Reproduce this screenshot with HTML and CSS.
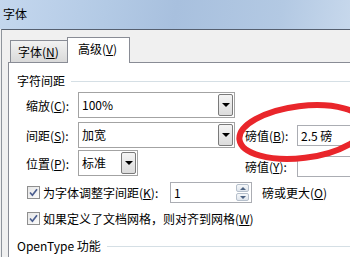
FILE: index.html
```html
<!DOCTYPE html>
<html lang="zh-CN">
<head>
    <meta charset="UTF-8">
    <title>字体</title>
    <link rel="stylesheet" href="styles.css">
</head>
<body>
    <div class="titlebar">字体</div>

    <div class="frame">
        <div class="tabs">
            <div class="tab">字体(<u>N</u>)</div>
            <div class="tab active">高级(<u>V</u>)</div>
        </div>

        <div class="panel">
            <div class="section">
                <span>字符间距</span>
                <div class="rule"></div>
            </div>

            <div class="row">
                <label class="lbl">缩放(<u>C</u>):</label>
                <div class="combo wide">
                    <span class="val">100%</span>
                    <span class="drop"></span>
                </div>
            </div>

            <div class="row">
                <label class="lbl">间距(<u>S</u>):</label>
                <div class="combo wide">
                    <span class="val">加宽</span>
                    <span class="drop"></span>
                </div>
                <div class="side">
                    <label class="lbl">磅值(<u>B</u>):</label>
                    <div class="field">2.5&nbsp;磅</div>
                </div>
            </div>

            <div class="row row-pos">
                <label class="lbl">位置(<u>P</u>):</label>
                <div class="combo narrow">
                    <span class="val">标准</span>
                    <span class="drop"></span>
                </div>
                <div class="side side-low">
                    <label class="lbl">磅值(<u>Y</u>):</label>
                    <div class="field"></div>
                </div>
            </div>

            <div class="check-row first">
                <span class="check">
                    <svg width="13" height="13" viewBox="0 0 13 13"><path d="M3 6.5 L5.4 9.2 L10 3.2" fill="none" stroke="#4a5d8e" stroke-width="1.7"/></svg>
                </span>
                <span class="check-text kern">为字体调整字间距(<u>K</u>):</span>
                <div class="spin">
                    <span class="val">1</span>
                    <span class="spin-btns">
                        <span class="spin-btn up"></span>
                        <span class="spin-btn down"></span>
                    </span>
                </div>
                <span class="after">磅或更大(<u>O</u>)</span>
            </div>

            <div class="check-row">
                <span class="check">
                    <svg width="13" height="13" viewBox="0 0 13 13"><path d="M3 6.5 L5.4 9.2 L10 3.2" fill="none" stroke="#4a5d8e" stroke-width="1.7"/></svg>
                </span>
                <span class="check-text">如果定义了文档网格，则对齐到网格(<u>W</u>)</span>
            </div>

            <div class="section second">
                <span>OpenType 功能</span>
                <div class="rule"></div>
            </div>
        </div>
    </div>

    <svg class="mark" width="118" height="76" viewBox="0 0 118 76">
        <ellipse cx="70" cy="37" rx="63" ry="26" transform="rotate(-7 70 37)" fill="none" stroke="#e9262b" stroke-width="6"/>
    </svg>
</body>
</html>
```

FILE: styles.css
```css
body {
    margin: 0;
    width: 350px;
    height: 257px;
    overflow: hidden;
    position: relative;
    font-family: "Noto Sans CJK SC", "Noto Sans", sans-serif;
    font-size: 12px;
    color: #000;
    background-color: #f0f0f0;
    display: flex;
    flex-direction: column;
}

u {
    text-decoration: underline;
    text-underline-offset: 1px;
}

.titlebar {
    height: 29px;
    line-height: 28px;
    padding-left: 3px;
    background: linear-gradient(100deg, #c4d7ee 0%, #b3cae5 30%, #a8c0de 50%, #b3c9e3 80%, #c7d8ec 100%);
    flex-shrink: 0;
}

.frame {
    flex: 1;
    border-top: 1px solid #566070;
    border-left: 1px solid #8e949c;
    margin-left: 1px;
    padding-left: 6px;
    display: flex;
    flex-direction: column;
    background-color: #f0f0f0;
}

.tabs {
    height: 32px;
    display: flex;
    align-items: flex-end;
    padding-left: 2px;
    flex-shrink: 0;
    position: relative;
    z-index: 1;
}

.tab {
    height: 21px;
    line-height: 21px;
    padding: 0 7px 0 7px;
    width: 42px;
    border: 1px solid #898c95;
    border-bottom: none;
    background: linear-gradient(#f2f2f2, #d9d9d9);
}

.tab.active {
    height: 25px;
    line-height: 22px;
    width: 49px;
    padding-left: 10px;
    padding-right: 2px;
    margin-left: -1px;
    margin-bottom: -1px;
    background: #fff;
}

.panel {
    flex: 1;
    background-color: #fff;
    border-top: 1px solid #898c95;
    border-left: 1px solid #898c95;
}

.section {
    display: flex;
    align-items: center;
    gap: 6px;
    height: 16px;
    margin-top: 9px;
    padding-left: 8px;
}

.section.second {
    margin-top: 8px;
}

.rule {
    flex: 1;
    height: 1px;
    margin-top: 3px;
    background-color: #d5dfe5;
}

.row {
    display: flex;
    align-items: center;
    height: 26px;
    margin-top: 4px;
    padding-left: 17px;
}

.row-pos {
    margin-top: 2px;
}

.lbl {
    width: 52px;
    flex-shrink: 0;
}

.combo {
    display: flex;
    height: 26px;
    box-sizing: border-box;
    border: 1px solid #a3a3a3;
    background: #fff;
    flex-shrink: 0;
}

.combo.wide {
    width: 157px;
}

.combo.narrow {
    width: 60px;
}

.combo .val {
    flex: 1;
    padding-left: 3px;
    line-height: 23px;
}

.drop {
    width: 15px;
    margin: 1px;
    box-sizing: border-box;
    border: 1px solid #7a7a7a;
    border-radius: 2px;
    background: linear-gradient(#f4f4f4, #dcdcdc);
    display: flex;
    align-items: center;
    justify-content: center;
}

.drop::after {
    content: "";
    border-left: 4px solid transparent;
    border-right: 4px solid transparent;
    border-top: 4px solid #000;
}

.side {
    display: flex;
    align-items: center;
    margin-left: 10px;
}

.row-pos .side {
    margin-left: 107px;
    align-self: flex-start;
    margin-top: 6px;
}

.field {
    width: 70px;
    height: 21px;
    box-sizing: border-box;
    border: 1px solid #abadb3;
    padding-left: 3px;
    line-height: 19px;
    flex-shrink: 0;
}

.check-row {
    display: flex;
    align-items: center;
    height: 21px;
    margin-top: 5px;
    padding-left: 18px;
}

.check-row.first {
    margin-top: 6px;
}

.check {
    width: 13px;
    height: 13px;
    box-sizing: border-box;
    border: 1px solid #8f8f8f;
    background: linear-gradient(135deg, #e6e6e6, #fbfbfb);
    display: flex;
    align-items: center;
    justify-content: center;
    margin-right: 3px;
    flex-shrink: 0;
}

.check svg {
    margin: -1px;
}

.check-text.kern {
    width: 127px;
    flex-shrink: 0;
}

.spin {
    width: 82px;
    height: 21px;
    box-sizing: border-box;
    border: 1px solid #abadb3;
    display: flex;
    flex-shrink: 0;
}

.spin .val {
    flex: 1;
    padding-left: 3px;
    line-height: 19px;
}

.spin-btns {
    width: 13px;
    margin: 1px 2px 1px 0;
    display: flex;
    flex-direction: column;
    gap: 1px;
}

.spin-btn {
    flex: 1;
    border: 1px solid #b6c0cc;
    border-radius: 2px;
    background: linear-gradient(#f6f8fa, #dfe5ec);
    display: flex;
    align-items: center;
    justify-content: center;
}

.spin-btn.up::after {
    content: "";
    border-left: 3px solid transparent;
    border-right: 3px solid transparent;
    border-bottom: 3px solid #4d6382;
}

.spin-btn.down::after {
    content: "";
    border-left: 3px solid transparent;
    border-right: 3px solid transparent;
    border-top: 3px solid #4d6382;
}

.after {
    margin-left: 10px;
    white-space: nowrap;
}

.mark {
    position: absolute;
    left: 232px;
    top: 95px;
}
```
